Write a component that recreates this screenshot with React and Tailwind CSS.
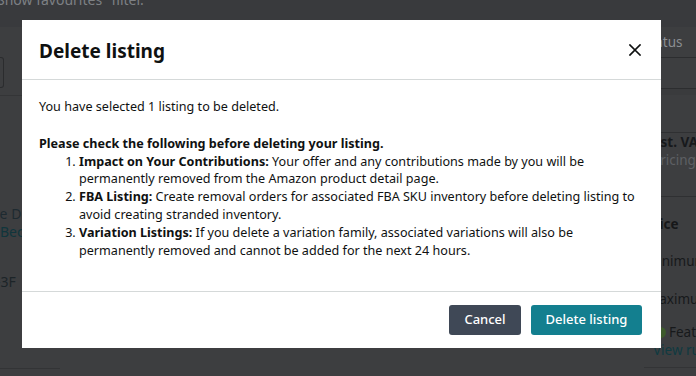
import React from "react";

export default function App() {
  return (
    <div
      className="relative w-[696px] h-[376px] overflow-hidden bg-[#3d3e40]"
      style={{ fontFamily: '"Noto Sans", "Open Sans", sans-serif' }}
    >
      {/* Background page (dimmed) */}
      <div className="flex flex-col h-full whitespace-nowrap">
        <div className="h-[27px] shrink-0 bg-[#393a3d] text-[14px] leading-none text-[#7d8084] overflow-hidden">
          <span className="block -ml-[3px] -mt-[7px]">Show favourites" filter.</span>
        </div>
        <div className="flex flex-1 justify-between">
          <div className="w-[60px] flex flex-col">
            <div className="h-[31px] mt-[30px] w-[4px] border border-l-0 border-[#2b2c2e] rounded-r-[3px]" />
            <div className="mt-[7px] border-t border-[#343537]" />
            <div className="mt-[109px] text-[14px] leading-[18px] text-[#1e2a30] -ml-[4px]">le D</div>
            <div className="text-[14px] leading-[18px] text-[#10353c]">Bec</div>
            <div className="mt-[32px] text-[14px] leading-[18px] text-[#1c2428] -ml-[4px]">-3F</div>
            <div className="mt-[77px] border-t border-[#333436]" />
          </div>
          <div className="w-[52px] flex flex-col text-[13.5px]">
            <div className="mt-[6px] leading-[18px] text-[#8b8e92] -ml-[1px]">Status</div>
            <div className="mt-[6px] border-t border-[#2c2d2f]" />
            <div className="h-[31px] border-b border-[#2c2d2f]" />
            <div className="h-[6px] bg-[#3a3b3d]" />
            <div className="mt-[37px] border-t border-[#2f3032]" />
            <div className="leading-[18px] font-bold text-[#17191c] pl-[9px]">Est. VAT</div>
            <div className="leading-[18px] text-[#5d6064] pl-[8px]">Pricing</div>
            <div className="mt-[27px] border-t border-[#2f3032]" />
            <div className="mt-[18px] leading-[18px] font-bold text-[#161719] pl-[1px]">Price</div>
            <div className="mt-[19px] leading-[18px] text-[#17191b] pl-[2px]">Minimum</div>
            <div className="mt-[20px] leading-[18px] text-[#17191b] pl-[3px]">Maximum</div>
            <div className="mt-[15px] leading-[18px] text-[#17191b] flex items-center gap-[3px] ml-[11px]">
              <span className="w-[11px] h-[11px] rounded-full bg-[#3d5a2c] inline-block shrink-0" />
              <span>Featured</span>
            </div>
            <div className="leading-[18px] text-[#0f3a41] ml-[9px]">View rules</div>
            <div className="mt-[8px] border-t border-[#333436]" />
          </div>
        </div>
      </div>

      {/* Modal */}
      <div className="absolute left-[22px] top-[20px] w-[639px] h-[328px] bg-white flex flex-col text-[#0f1111]">
        <div className="h-[60px] flex items-center justify-between pl-[17px] pr-[19px] pt-[3px] border-b border-[#d5d9d9]">
          <h2 className="text-[19px] font-bold leading-none text-[#0f1111]">Delete listing</h2>
          <button className="w-[14px] h-[14px] flex items-center justify-center -mt-[2px]">
            <svg width="12" height="12" viewBox="0 0 12 12" fill="none">
              <path d="M1 1L11 11M11 1L1 11" stroke="#0f1111" strokeWidth="1.7" strokeLinecap="square" />
            </svg>
          </button>
        </div>
        <div className="flex-1 px-[17px] pt-[18px] text-[12.6px] leading-[17.8px]">
          <p>You have selected 1 listing to be deleted.</p>
          <p className="mt-[19px] font-bold">Please check the following before deleting your listing.</p>
          <ol className="list-decimal pl-[40px]">
            <li>
              <span className="font-bold">Impact on Your Contributions:</span> Your offer and any contributions made by you will be permanently removed from the Amazon product detail page.
            </li>
            <li>
              <span className="font-bold">FBA Listing:</span> Create removal orders for associated FBA SKU inventory before deleting listing to avoid creating stranded inventory.
            </li>
            <li>
              <span className="font-bold">Variation Listings:</span> If you delete a variation family, associated variations will also be permanently removed and cannot be added for the next 24 hours.
            </li>
          </ol>
        </div>
        <div className="h-[57px] border-t border-[#d5d9d9] flex items-center justify-end gap-[10px] pr-[19px]">
          <button className="h-[30px] w-[72px] rounded-[3px] bg-[#3f4856] text-white text-[13px] font-medium">Cancel</button>
          <button className="h-[30px] w-[111px] rounded-[3px] bg-[#137f8f] text-white text-[13px] font-medium">Delete listing</button>
        </div>
      </div>
    </div>
  );
}
